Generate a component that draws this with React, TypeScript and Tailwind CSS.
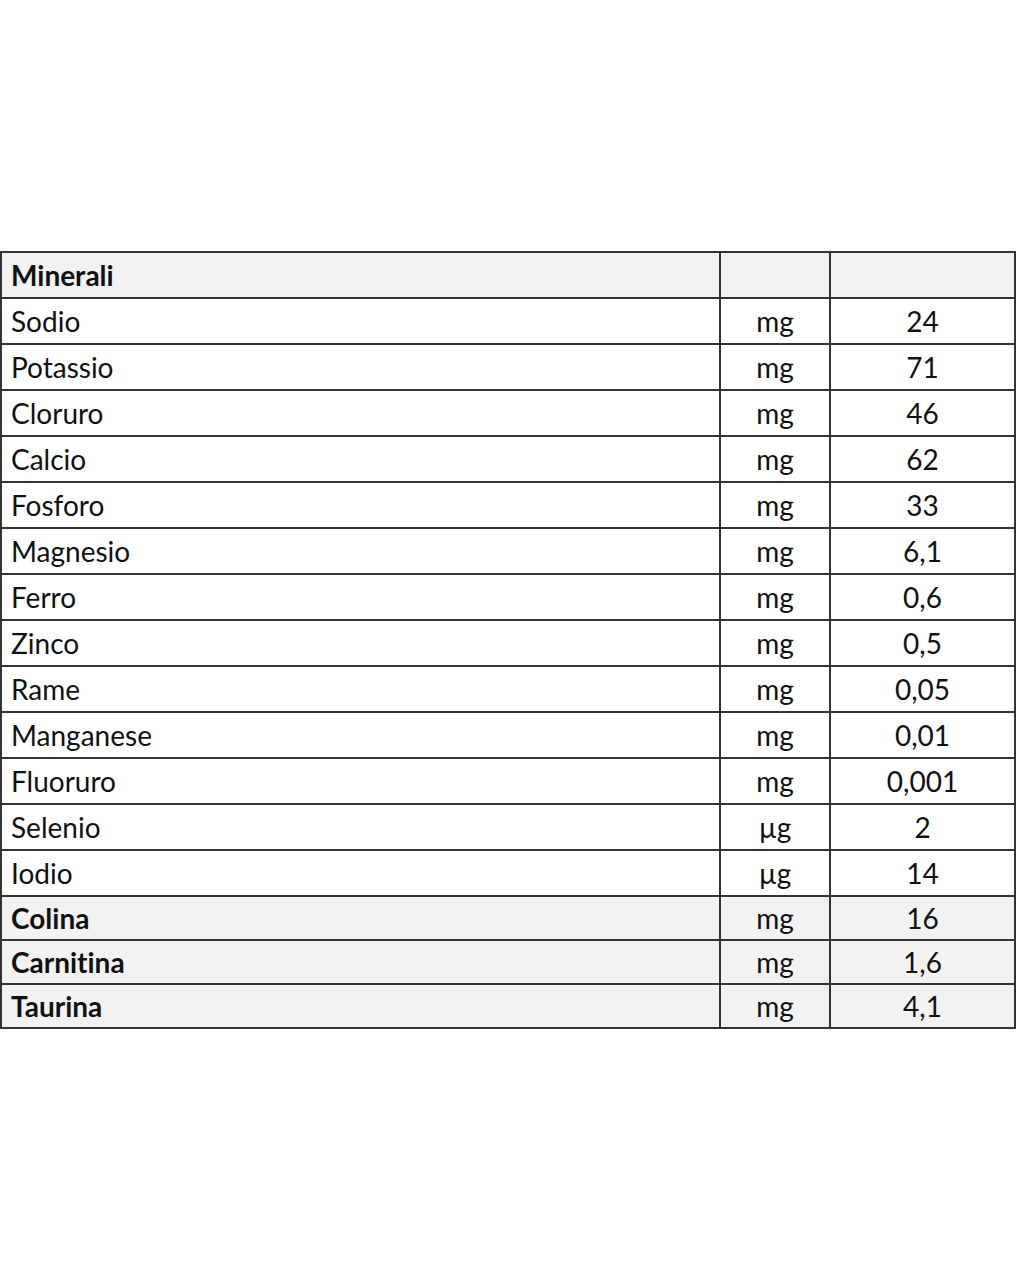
const rows: { name: string; unit: string; value: string; bold?: boolean }[] = [
  { name: 'Sodio', unit: 'mg', value: '24' },
  { name: 'Potassio', unit: 'mg', value: '71' },
  { name: 'Cloruro', unit: 'mg', value: '46' },
  { name: 'Calcio', unit: 'mg', value: '62' },
  { name: 'Fosforo', unit: 'mg', value: '33' },
  { name: 'Magnesio', unit: 'mg', value: '6,1' },
  { name: 'Ferro', unit: 'mg', value: '0,6' },
  { name: 'Zinco', unit: 'mg', value: '0,5' },
  { name: 'Rame', unit: 'mg', value: '0,05' },
  { name: 'Manganese', unit: 'mg', value: '0,01' },
  { name: 'Fluoruro', unit: 'mg', value: '0,001' },
  { name: 'Selenio', unit: 'µg', value: '2' },
  { name: 'Iodio', unit: 'µg', value: '14' },
  { name: 'Colina', unit: 'mg', value: '16', bold: true },
  { name: 'Carnitina', unit: 'mg', value: '1,6', bold: true },
  { name: 'Taurina', unit: 'mg', value: '4,1', bold: true },
];

export default function App() {
  return (
    <div className="w-[1020px] h-[1282px] bg-white pt-[251px] text-[#111] [font-variant-ligatures:none]" style={{ fontFamily: 'Lato, "Open Sans", sans-serif' }}>
      <table className="w-[1016px] border-collapse table-fixed text-[28px] leading-[1.3]">
        <colgroup>
          <col className="w-[719px]" />
          <col className="w-[110px]" />
          <col />
        </colgroup>
        <tbody>
          <tr className="h-[46px] bg-[#f2f2f2]">
            <td className="border-2 border-[#333] pl-[9px] font-bold">Minerali</td>
            <td className="border-2 border-[#333]"></td>
            <td className="border-2 border-[#333]"></td>
          </tr>
          {rows.map((r) => (
            <tr key={r.name} className={r.bold ? 'h-[44px] bg-[#f2f2f2]' : 'h-[46px]'}>
              <td className={`border-2 border-[#333] pl-[9px] ${r.bold ? 'font-bold' : ''}`}>{r.name}</td>
              <td className="border-2 border-[#333] text-center">{r.unit}</td>
              <td className="border-2 border-[#333] text-center">{r.value}</td>
            </tr>
          ))}
        </tbody>
      </table>
    </div>
  );
}
